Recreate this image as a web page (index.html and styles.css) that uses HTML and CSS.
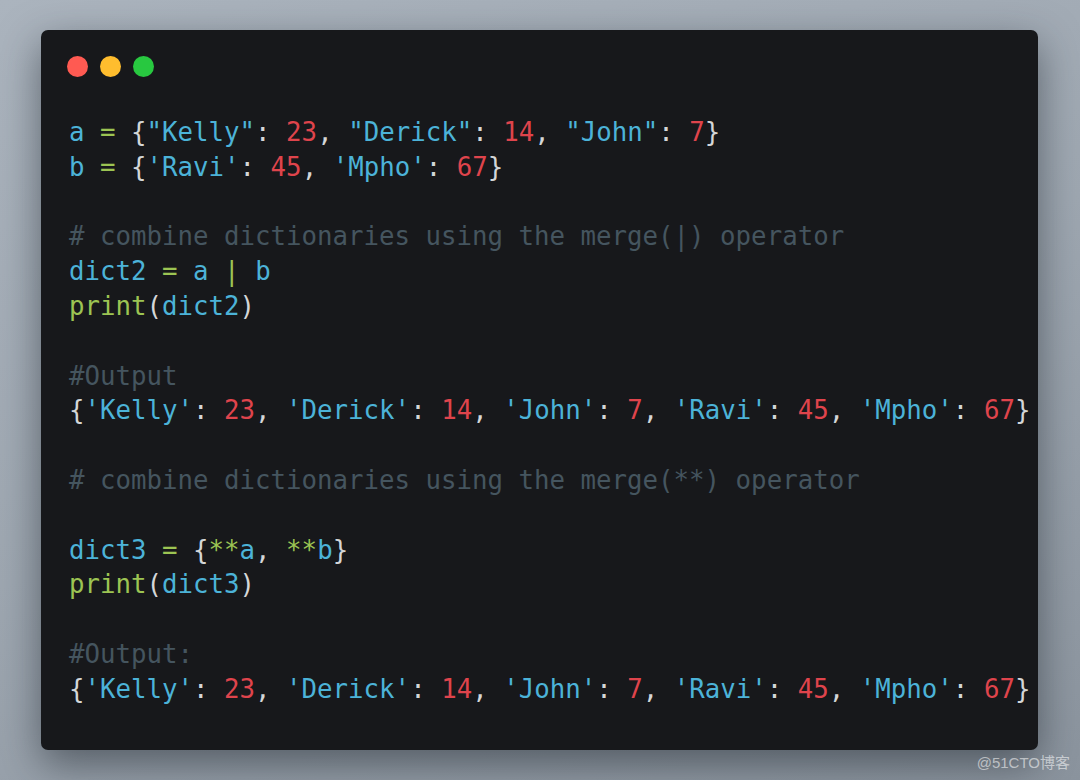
FILE: index.html
```html
<!DOCTYPE html>
<html lang="en">
<head>
    <meta charset="UTF-8">
    <title>merge dictionaries</title>
    <link rel="stylesheet" href="styles.css">
</head>
<body>
<div class="window">
    <div class="dots">
        <span class="dot red"></span><span class="dot yellow"></span><span class="dot green"></span>
    </div>
<pre class="code"><span class="v">a</span> <span class="o">=</span> {<span class="v">"Kelly"</span>: <span class="n">23</span>, <span class="v">"Derick"</span>: <span class="n">14</span>, <span class="v">"John"</span>: <span class="n">7</span>}
<span class="v">b</span> <span class="o">=</span> {<span class="v">'Ravi'</span>: <span class="n">45</span>, <span class="v">'Mpho'</span>: <span class="n">67</span>}

<span class="c"># combine dictionaries using the merge(|) operator</span>
<span class="v">dict2</span> <span class="o">=</span> <span class="v">a</span> <span class="o">|</span> <span class="v">b</span>
<span class="o">print</span>(<span class="v">dict2</span>)

<span class="c">#Output</span>
{<span class="v">'Kelly'</span>: <span class="n">23</span>, <span class="v">'Derick'</span>: <span class="n">14</span>, <span class="v">'John'</span>: <span class="n">7</span>, <span class="v">'Ravi'</span>: <span class="n">45</span>, <span class="v">'Mpho'</span>: <span class="n">67</span>}

<span class="c"># combine dictionaries using the merge(**) operator</span>

<span class="v">dict3</span> <span class="o">=</span> {<span class="o">**</span><span class="v">a</span>, <span class="o">**</span><span class="v">b</span>}
<span class="o">print</span>(<span class="v">dict3</span>)

<span class="c">#Output:</span>
{<span class="v">'Kelly'</span>: <span class="n">23</span>, <span class="v">'Derick'</span>: <span class="n">14</span>, <span class="v">'John'</span>: <span class="n">7</span>, <span class="v">'Ravi'</span>: <span class="n">45</span>, <span class="v">'Mpho'</span>: <span class="n">67</span>}</pre>
</div>
<div class="mark">@51CTO博客</div>
</body>
</html>
```

FILE: styles.css
```css
html,body{margin: 0; padding: 0; height: 100%}
body{position: relative; overflow: hidden; background: linear-gradient(160deg, #abb4be 0%, #9ea7b1 50%, #8b949e 100%); font-family: "DejaVu Sans Mono", monospace}

.window{box-sizing: border-box; margin: 30px 0 0 41px; width: 997px; height: 720px; padding: 26px 0 0 28px; background: #17181b; border-radius: 7px; box-shadow: 0 14px 40px rgba(30,36,44,.55)}
.dots{display: flex; gap: 12px; height: 22px; margin-left: -2px}
.dot{display: block; width: 21px; height: 21px; border-radius: 50%}
.dot.red{background: #ff5a52}
.dot.yellow{background: #ffbd2e}
.dot.green{background: #28c840}

.code{margin: 37px 0 0; font-family: "DejaVu Sans Mono", monospace; font-size: 25.75px; line-height: 34.8px; color: #d4d6d8; white-space: pre}
.code .v{color: #4cb3d8}
.code .n{color: #df444c}
.code .o{color: #9cc453}
.code .c{color: #45555f}

.mark{position: absolute; right: 10px; bottom: 8px; font-family: "Liberation Sans", "Noto Sans CJK SC", sans-serif; font-size: 15px; color: rgba(255,255,255,.55)}
```
